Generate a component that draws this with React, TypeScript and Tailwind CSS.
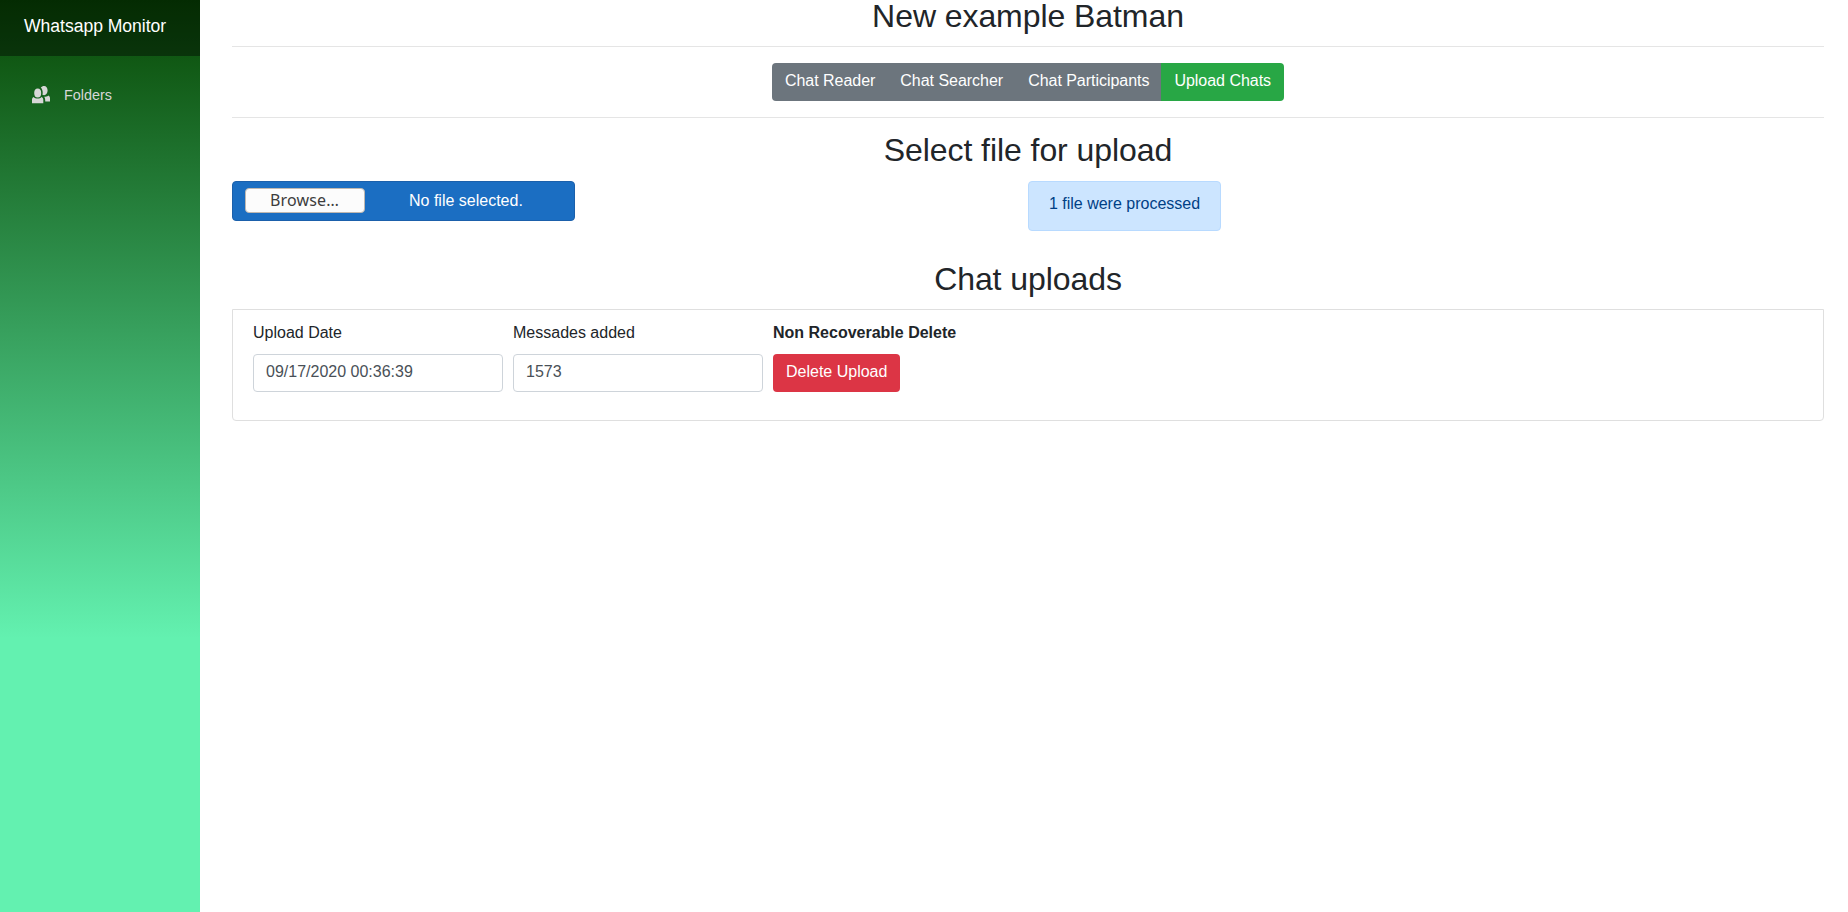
import React from 'react';

const tabs = ['Chat Reader', 'Chat Searcher', 'Chat Participants'];

function PeopleIcon() {
  return (
    <svg viewBox="0 0 18 18" className="h-[18px] w-[18px] fill-current" aria-hidden="true">
      <ellipse cx="5.7" cy="6.9" rx="3.5" ry="4.5" />
      <path d="M8.800 1.600C9.600.6 10.800 0 12.100 0c2 0 3.500 2 3.500 4.600S14.100 9.200 12.100 9.200c-.6 0-1.200-.2-1.700-.5.2-.6.3-1.200.3-1.900 0-2.100-.7-3.900-1.900-5.200z" />
      <path d="M0 17.300v-3.600c0-1.300.6-2.300 1.600-2.800 1 1 2.400 1.500 4 1.500s3-.5 4-1.500c1 .5 1.700 1.500 1.700 2.800v3.600z" />
      <path d="M16.300 9.500c1 .5 1.700 1.500 1.700 2.700V15.500h-4.800v-1.600c0-1.200-.4-2.200-1-3.100 1.600 0 3.100-.2 4.100-1.300z" />
    </svg>
  );
}

function Sidebar() {
  return (
    <aside className="w-[200px] shrink-0 bg-[linear-gradient(180deg,#084904_0%,#63f1b0_70%)]">
      <div className="flex h-14 items-center bg-black/40 px-6 pb-[5px] text-[17.6px] tracking-[-0.04px] text-white">
        Whatsapp Monitor
      </div>
      <nav className="px-8 pt-[30px]">
        <a href="#" className="flex items-center gap-[14px] text-[14.4px] leading-[18px] text-[#d7d7d7]">
          <PeopleIcon />
          <span>Folders</span>
        </a>
      </nav>
    </aside>
  );
}

function Heading({ children }: { children: React.ReactNode }) {
  return (
    <h2 className="mb-[13px] text-center text-[32px] leading-[33.4px] font-medium tracking-[-0.07px]">{children}</h2>
  );
}

function Field({ label, value }: { label: string; value: string }) {
  return (
    <label className="flex w-[250px] flex-col gap-[9px]">
      <span>{label}</span>
      <input
        readOnly
        value={value}
        className="h-[38px] rounded border border-[#ced4da] px-3 pb-[2px] text-[#495057] outline-none"
      />
    </label>
  );
}

export default function App() {
  return (
    <div className="flex h-screen bg-white font-['Liberation_Sans',Arial,sans-serif] text-base leading-6 text-[#212529]">
      <Sidebar />
      <main className="flex-1 pr-6 pl-8">
        <Heading>New example Batman</Heading>
        <hr className="mb-4 border-[#e5e5e5]" />
        <div className="flex justify-center text-white">
          <div className="flex overflow-hidden rounded">
            {tabs.map((tab) => (
              <button key={tab} className="h-[38px] bg-[#6c757d] pr-3 pb-[2px] pl-[13px] tracking-[-0.03px]">
                {tab}
              </button>
            ))}
            <button className="h-[38px] bg-[#28a745] px-[13px] pb-[2px] tracking-[-0.03px]">Upload Chats</button>
          </div>
        </div>
        <hr className="my-4 border-[#e5e5e5]" />
        <Heading>Select file for upload</Heading>
        <div className="grid grid-cols-2">
          <div>
            <div className="flex h-10 w-[343px] items-center rounded border border-[#1b60ab] bg-[#1b6ec2] px-3 text-white">
              <button className="h-[25px] w-[120px] rounded border border-[#bfb8b1] bg-[#fcfcfc] pr-px pb-px font-['Noto_Sans',sans-serif] leading-[20px] tracking-[0.15px] text-[#3d3d3d]">
                Browse…
              </button>
              <span className="ml-[44px]">No file selected.</span>
            </div>
          </div>
          <div className="mb-8 h-[50px] w-[193px] rounded border border-[#b8daff] bg-[#cce5ff] py-[10px] text-center text-[#004085]">
            1 file were processed
          </div>
        </div>
        <Heading>Chat uploads</Heading>
        <section className="flex h-[112px] gap-[10px] rounded-b border border-[#dfdfdf] px-5 pt-[11px]">
          <Field label="Upload Date" value="09/17/2020 00:36:39" />
          <Field label="Messades added" value="1573" />
          <div className="flex flex-col items-start gap-[9px]">
            <span className="font-bold">Non Recoverable Delete</span>
            <button className="h-[38px] rounded bg-[#dc3545] px-[13px] pb-[2px] text-white">Delete Upload</button>
          </div>
        </section>
      </main>
    </div>
  );
}
